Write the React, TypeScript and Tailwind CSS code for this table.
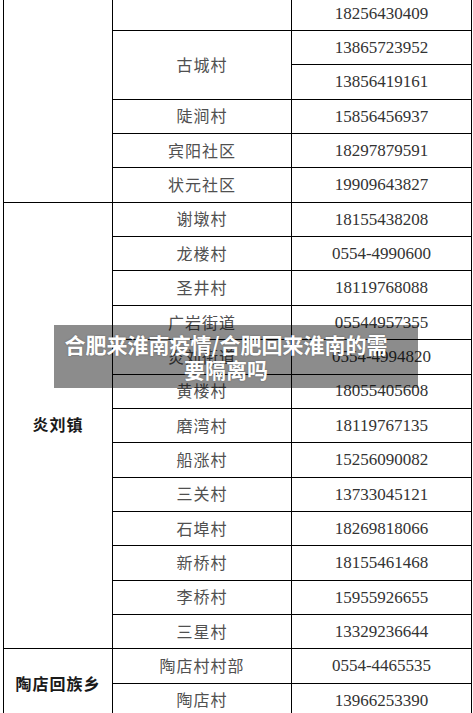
import React from "react";

const cjk = "font-['Noto_Sans_CJK_SC','Noto_Sans_CJK_JP',sans-serif]";
const num = "font-['Liberation_Serif','DejaVu_Serif',serif]";

function NameCell({ text, span2 }: { text: string; span2?: boolean }) {
  return (
    <div
      className={`bg-white flex items-center justify-center pb-[2px] text-[16px] tracking-[1px] text-[#505050] ${cjk} ${
        span2 ? "row-span-2" : ""
      }`}
    >
      {text}
    </div>
  );
}

function NumCell({ text }: { text: string }) {
  return (
    <div className={`bg-white flex items-center justify-center text-[17px] text-[#333] ${num}`}>
      {text}
    </div>
  );
}

export default function App() {
  const rowsA: [string, string][] = [
    ["陡涧村", "15856456937"],
    ["宾阳社区", "18297879591"],
    ["状元社区", "19909643827"],
  ];
  const rowsB: [string, string][] = [
    ["谢墩村", "18155438208"],
    ["龙楼村", "0554-4990600"],
    ["圣井村", "18119768088"],
    ["广岩街道", "05544957355"],
    ["炎刘街道", "0554-4994820"],
    ["黄楼村", "18055405608"],
    ["磨湾村", "18119767135"],
    ["船涨村", "15256090082"],
    ["三关村", "13733045121"],
    ["石埠村", "18269818066"],
    ["新桥村", "18155461468"],
    ["李桥村", "15955926655"],
    ["三星村", "13329236644"],
  ];

  return (
    <div className="relative h-[713px] w-[473px] overflow-hidden bg-white">
      <div className="ml-[3px] -mt-[4.4px] w-[469px] grid grid-cols-[108px_178px_179px] grid-rows-[repeat(21,33.37px)] gap-px p-px bg-black">
        {/* group 1 */}
        <div className="bg-white row-span-6" />
        <div className="bg-white" />
        <NumCell text="18256430409" />
        <NameCell text="古城村" span2 />
        <NumCell text="13865723952" />
        <NumCell text="13856419161" />
        {rowsA.map(([a, b], i) => (
          <React.Fragment key={"a" + i}>
            <NameCell text={a} />
            <NumCell text={b} />
          </React.Fragment>
        ))}

        {/* group 2 */}
        <div
          className={`bg-white row-span-13 flex items-center justify-center pb-[3px] text-[16px] font-bold tracking-[1px] text-[#1a1a1a] ${cjk}`}
        >
          炎刘镇
        </div>
        {rowsB.map(([a, b], i) => (
          <React.Fragment key={"b" + i}>
            <NameCell text={a} />
            <NumCell text={b} />
          </React.Fragment>
        ))}

        {/* group 3 */}
        <div
          className={`bg-white row-span-2 flex items-center justify-center text-[16px] font-bold tracking-[1px] text-[#1a1a1a] ${cjk}`}
        >
          陶店回族乡
        </div>
        <NameCell text="陶店村村部" />
        <NumCell text="0554-4465535" />
        <NameCell text="陶店村" />
        <NumCell text="13966253390" />
      </div>

      {/* overlay banner */}
      <div className="absolute left-[54px] top-[325px] w-[364px] h-[63px] bg-black/45 flex items-center pr-[20px]">
        <div
          className={`w-full text-center text-white font-bold text-[21px] leading-[25px] whitespace-nowrap [text-shadow:0_0_2px_rgba(0,0,0,0.3)] ${cjk}`}
        >
          合肥来淮南疫情/合肥回来淮南的需
          <br />
          要隔离吗
        </div>
      </div>
    </div>
  );
}
